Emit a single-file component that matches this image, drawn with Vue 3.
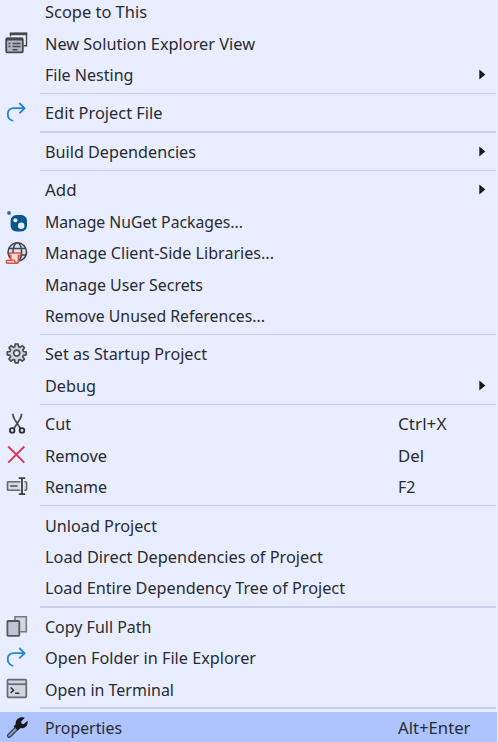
<script setup>
const groups = [
  [
    { label: 'Scope to This', w: 102 },
    { label: 'New Solution Explorer View', icon: 'windows', w: 210 },
    { label: 'File Nesting', sub: true, w: 88.5 }
  ],
  [{ label: 'Edit Project File', icon: 'arrow', w: 117.5 }],
  [{ label: 'Build Dependencies', sub: true, w: 151 }],
  [
    { label: 'Add', sub: true, w: 31.5 },
    { label: 'Manage NuGet Packages...', icon: 'nuget', w: 198 },
    { label: 'Manage Client-Side Libraries...', icon: 'globe', w: 229 },
    { label: 'Manage User Secrets', w: 158 },
    { label: 'Remove Unused References...', w: 220 }
  ],
  [
    { label: 'Set as Startup Project', icon: 'gear', w: 162 },
    { label: 'Debug', sub: true, w: 51 }
  ],
  [
    { label: 'Cut', icon: 'cut', key: 'Ctrl+X', w: 26, kw: 48.5 },
    { label: 'Remove', icon: 'remove', key: 'Del', w: 62, kw: 26 },
    { label: 'Rename', icon: 'rename', key: 'F2', w: 62, kw: 17.5 }
  ],
  [
    { label: 'Unload Project', w: 112 },
    { label: 'Load Direct Dependencies of Project', w: 278 },
    { label: 'Load Entire Dependency Tree of Project', w: 300 }
  ],
  [
    { label: 'Copy Full Path', icon: 'copy', w: 106.5 },
    { label: 'Open Folder in File Explorer', icon: 'arrow', w: 211 },
    { label: 'Open in Terminal', icon: 'terminal', w: 129 }
  ],
  [{ label: 'Properties', icon: 'wrench', key: 'Alt+Enter', w: 77, kw: 72.5, selected: true }]
]
</script>

<template>
  <nav class="menu">
    <div v-for="(group, g) in groups" :key="g" class="group">
      <div v-for="item in group" :key="item.label" class="row" :class="{ selected: item.selected }">
        <span class="icon">
          <svg v-if="item.icon === 'windows'" width="24" height="24" viewBox="0 0 24 24" fill="none" stroke="#46484d">
            <path d="M6.5 4.5V1.7h16v12h-3" stroke-width="1.4" />
            <path d="M5.8 1.8h17.4" stroke-width="2.8" />
            <rect x="2.2" y="6.5" width="16.6" height="13.8" rx="1" fill="#b3b6c0" stroke-width="1.8" />
            <path d="M2 7.1h17" stroke-width="2.8" />
            <path d="M4.5 11.5h2M8.5 11.5h8M4.5 14.5h2M8.5 14.5h8M8.5 17.8h5" stroke-width="1.4" />
          </svg>
          <svg v-else-if="item.icon === 'arrow'" width="24" height="24" viewBox="0 0 24 24" fill="none" stroke="#2584d5" stroke-width="1.8">
            <path d="M9.3 20C1.8 17.8 1.8 7.5 10 7.2h10.3M15.3 2l5.3 5.2-5.3 5.2" />
          </svg>
          <svg v-else-if="item.icon === 'nuget'" width="24" height="24" viewBox="0 0 24 24">
            <circle cx="5" cy="3" r="1.9" fill="#2f70a0" />
            <rect x="6.6" y="5" width="16.4" height="16.4" rx="5.7" fill="#0b568b" />
            <circle cx="11.4" cy="10.2" r="2" fill="#e8eeff" />
            <circle cx="17.2" cy="15.8" r="3.2" fill="#e8eeff" />
          </svg>
          <svg v-else-if="item.icon === 'globe'" width="24" height="24" viewBox="0 0 24 24" fill="none" stroke="#42454c" stroke-width="1.6">
            <circle cx="13.3" cy="11" r="9.2" fill="#dce1ed" />
            <ellipse cx="13.3" cy="11" rx="4.3" ry="9.2" />
            <path d="M4.8 7.5h17M4.3 14h18" />
            <path d="M6.5 12h9c1.5 0 1.8 2.6.2 2.6h-1.2v4.8c0 2-1 2.8-2.5 2.8H4c-2.2 0-2.2-3 0-3h2.8v-4.6C4.8 14.4 4.8 12 6.5 12Z" fill="#f7dcd9" stroke="#d65243" stroke-width="1.6" />
            <path d="M7 19.2h3.6c0 1.5.4 2.5 1.4 2.8" stroke="#d65243" stroke-width="1.3" />
          </svg>
          <svg v-else-if="item.icon === 'gear'" width="24" height="24" viewBox="0 0 24 24" fill="none" stroke="#4a4c52" stroke-width="1.9">
            <path d="m10.8 2.3 3.4 0 .5 3.1 1.6.7 2.6-1.9 2.4 2.4-1.9 2.6.7 1.6 3.1.5v3.4l-3.1.5-.7 1.6 1.9 2.6-2.4 2.4-2.6-1.9-1.6.7-.5 3.1h-3.4l-.5-3.1-1.6-.7-2.6 1.9-2.4-2.4 1.9-2.6-.7-1.6-3.1-.5v-3.4l3.1-.5.7-1.6-1.9-2.6 2.4-2.4 2.6 1.9 1.6-.7Z" transform="translate(1.7 0) scale(.88)" fill="#d0d5e2" stroke-linejoin="round" />
            <circle cx="12.7" cy="11.1" r="3" fill="#e8eeff" stroke-width="1.6" />
          </svg>
          <svg v-else-if="item.icon === 'cut'" width="24" height="24" viewBox="0 0 24 24" fill="none" stroke="#4a4c51" stroke-width="1.8">
            <path d="M8.8 1.8c.1 2.2.8 3.8 1.8 5.6l5.9 9M17.6 1.8c-.1 2.2-.8 3.8-1.8 5.6l-5.9 9" />
            <circle cx="8.2" cy="18.4" r="2.3" stroke="#2b2d31" /><circle cx="18" cy="18.4" r="2.3" stroke="#2b2d31" />
          </svg>
          <svg v-else-if="item.icon === 'remove'" width="24" height="24" viewBox="0 0 24 24" fill="none" stroke="#e03450" stroke-width="1.9">
            <path d="M4.2 2.5 20.3 18.6M20.3 2.5 4.2 18.6" />
          </svg>
          <svg v-else-if="item.icon === 'rename'" width="24" height="24" viewBox="0 0 24 24" fill="none" stroke="#66686e" stroke-width="1.6">
            <path d="M16.3 6.7H4l-.5.5v7.6l.5.5h12.3M20.3 6.7h1.5l.8.8v7l-.8.8h-1.5" fill="#d5d9e6" />
            <path d="M6.3 11h7.2" stroke-width="1.8" />
            <path d="M14.8 3.1h6.4M18 3.1v16M14.8 19.1h6.4" stroke="#3e4046" stroke-width="1.9" />
          </svg>
          <svg v-else-if="item.icon === 'copy'" width="24" height="24" viewBox="0 0 24 24" fill="none" stroke="#75787f" stroke-width="1.6">
            <path d="M11 5V1.8h11.3v15h-6" fill="#d1d6e4" />
            <rect x="3.4" y="6" width="11.9" height="14.8" rx=".7" fill="#c0c4d0" stroke="#54565c" stroke-width="1.8" />
          </svg>
          <svg v-else-if="item.icon === 'terminal'" width="24" height="24" viewBox="0 0 24 24" fill="none" stroke="#66696f" stroke-width="1.7">
            <rect x="3.5" y="1.7" width="18.8" height="17.6" rx=".8" fill="#d0d5e2" />
            <path d="M4 6.2h18.5" />
            <path d="m6.6 9.5 3 2.7-3 2.7M11 15.2h4.3" stroke="#333" stroke-width="1.5" />
          </svg>
          <svg v-else-if="item.icon === 'wrench'" width="24" height="24" viewBox="0 0 24 24">
            <path d="m13.5 11.6-8.3 8" stroke="#3c4558" stroke-width="4.6" stroke-linecap="round" />
            <path d="m12.3 12.8-7.1 6.8" stroke="#8f9bb9" stroke-width="2" stroke-linecap="round" />
            <path d="M20.7 1.7 17.2 5.5l.4 2.2 2.2.4 3.7-3.4c1 4.7-2.6 8.5-7.2 7.4l-2.6 2.5-4.1-4.1 2.2-2.4c-.9-4.7 4.1-8.2 8.9-6.4Z" fill="#17191e" />
          </svg>
        </span>
        <svg class="label" width="330" height="26">
          <text x="0" y="18.5" :textLength="item.w" lengthAdjust="spacingAndGlyphs">{{ item.label }}</text>
        </svg>
        <svg v-if="item.key" class="key" width="84" height="26">
          <text x="0" y="18.5" :textLength="item.kw" lengthAdjust="spacingAndGlyphs">{{ item.key }}</text>
        </svg>
        <svg v-if="item.sub" class="sub" width="7" height="12" viewBox="0 0 7 12"><path d="M.3.5 6.3 5.5 .3 10.5Z" fill="#151719" /></svg>
      </div>
    </div>
  </nav>
</template>

<style>
body { background: #e8eeff; overflow: hidden; }
</style>
<style scoped>
.menu {
  box-sizing: border-box;
  width: 498px;
  height: 746px;
  margin-top: -3.5px;
  overflow: hidden;
  background: #e8eeff;
  color: #2a2b30;
  font-family: "Noto Sans", "Open Sans", sans-serif;
  font-size: 16.8px;
}
.group + .group::before {
  content: "";
  display: block;
  height: 1.7px;
  margin: 2px 2px 3.4px 40px;
  background: #c6d1f2;
}
.row {
  display: flex;
  align-items: center;
  width: 497px;
  height: 31.4px;
}
.selected { background: #adc4ff; }
.icon {
  display: flex;
  flex: none;
  width: 24px;
  height: 24px;
  margin: 0 17.8px 0 3.6px;
}
.label, .key { flex: none; display: block; }
.label { margin-right: 23px; }
.label text, .key text { fill: currentColor; }
.sub { margin-left: 80.4px; flex: none; }
</style>
